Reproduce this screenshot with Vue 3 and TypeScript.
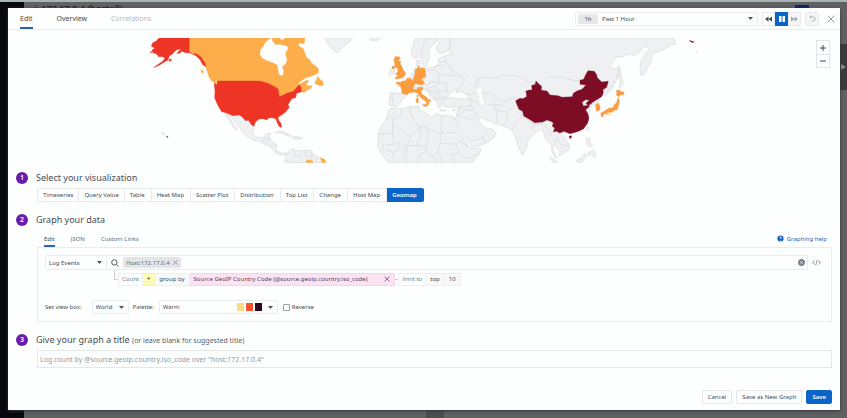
<script setup lang="ts">
import { ref } from 'vue'

type Tone = 'land' | 'sea' | 'light' | 'amber' | 'red' | 'wine'
interface Shape { tone: Tone; points: string }
interface Region { name: string; x: number; y: number; shapes: Shape[]; borders: string }

const tabs = ['Edit', 'Overview', 'Correlations']
const visualizations = ['Timeseries', 'Query Value', 'Table', 'Heat Map', 'Scatter Plot', 'Distribution', 'Top List', 'Change', 'Host Map', 'Geomap']
const editorTabs = ['Edit', 'JSON', 'Custom Links']
const palette = ['#fbdc85', '#f9532d', '#2d0820']

const activeTab = ref('Edit')
const activeVisualization = ref('Geomap')
const activeEditorTab = ref('Edit')
const query = ref('')
const reverse = ref(false)
const title = ref('')

const regions: Region[] = [
  {
    name: 'americas', x: 140, y: 30,
    shapes: [
      { tone: 'land', points: '553,24 638,24 626,38 608,50 598,64 590,68 576,56 566,44' },
      { tone: 'land', points: '262,250 278,257 298,255 310,265 325,270 342,288 340,310 350,322 372,322 378,312 392,310 388,325 372,330 365,338 335,328 315,315 300,295 290,285 282,270' },
      { tone: 'land', points: '256,252 264,254 270,264 280,282 292,302 284,296 270,276 262,264' },
      { tone: 'land', points: '365,338 372,328 388,324 400,338 410,345 408,362 428,370 440,368 436,376 420,375 405,368 395,352 380,345' },
      { tone: 'land', points: '405,308 418,303 432,305 455,318 446,319 425,310' },
      { tone: 'land', points: '455,322 466,319 478,321 490,326 476,328 460,327' },
      { tone: 'land', points: '434,397 438,376 448,362 460,356 466,362 480,362 498,360 515,362 522,372 532,380 545,384 556,390 558,398' },
      { tone: 'light', points: '148,24 392,24 376,36 370,48 362,58 359,72 366,84 384,94 398,98 412,105 414,120 416,132 424,138 431,132 431,120 427,110 438,101 442,88 437,76 438,66 444,58 442,48 430,46 420,42 408,44 398,34 396,24 420,24 424,30 432,28 434,24 495,24 493,40 488,42 480,38 474,44 482,52 490,56 494,66 499,82 510,90 514,99 528,109 536,117 535,129 522,136 512,139 495,145 480,155 473,166 488,157 502,150 506,153 498,164 506,168 516,167 514,174 500,182 491,188 485,186 482,170 470,170 460,184 440,190 418,200 415,178 405,170 380,158 360,153 232,153 220,150 207,141 203,128 196,108 186,86 172,72 160,72 148,66' },
      { tone: 'light', points: '524,160 534,138 540,149 550,155 550,166 538,167' },
      { tone: 'light', points: '207,140 220,147 231,158 228,161 215,153' },
      { tone: 'light', points: '183,118 190,124 188,131 184,126' },
      { tone: 'light', points: '497,393 508,389 518,392 518,398 500,398' },
      { tone: 'light', points: '541,384 554,388 558,398 546,398' },
      { tone: 'red', points: '57,24 148,24 148,66 158,72 170,71 182,80 194,97 198,110 188,104 181,90 168,77 150,69 136,68 126,64 118,70 110,70 124,56 110,60 102,66 98,72 88,78 84,90 70,98 58,106 40,113 56,102 68,94 75,84 68,80 56,80 50,72 38,68 36,60 44,55 34,48 38,38 48,34' },
      { tone: 'red', points: '86,90 94,86 94,92 88,94' },
      { tone: 'red', points: '30,66 34,64 35,68 32,69' },
      { tone: 'red', points: '232,153 360,153 380,158 405,170 415,178 418,200 440,190 460,184 470,172 477,165 482,168 485,185 470,190 467,203 455,206 450,215 444,224 448,232 436,247 424,256 414,262 416,271 423,280 425,292 419,291 413,281 408,267 396,263 386,264 380,270 370,266 358,267 346,276 342,289 334,284 326,271 316,272 308,262 298,255 278,257 262,250 245,245 238,234 230,218 224,204 225,182 222,160 231,164' },
      { tone: 'wine', points: '80,318 84,320 81,323' },
      { tone: 'land', points: '64,308 68,308 72,311 76,314 70,312' },
    ],
    borders: 'M376 337L390 325M392 348L410 345M408 360L405 368M460 356L464 376L482 380L484 398M498 382L497 362M498 382L520 376M515 365L516 390M530 380L528 396',
  },
  {
    name: 'eurasia', x: 370, y: 30,
    shapes: [
      { tone: 'land', points: '0,24 32,24 24,31 10,33 0,30' },
      { tone: 'land', points: '136,24 128,48 124,64 126,78 138,86 150,76 154,94 160,108 169,108 174,94 180,80 176,68 182,50 196,38 198,24' },
      { tone: 'land', points: '200,24 240,24 242,50 230,66 212,71 203,66 198,52 208,40 202,34' },
      { tone: 'land', points: '138,92 149,90 148,108 140,108' },
      { tone: 'land', points: '240,24 912,24 917,42 905,44 890,54 872,62 856,68 844,72 846,84 842,100 832,114 822,134 812,134 810,116 812,96 820,80 832,68 838,58 830,50 818,54 806,68 794,76 774,72 756,80 740,80 728,96 718,110 734,116 746,114 750,126 740,150 724,180 708,194 690,198 686,216 668,224 660,242 640,298 600,308 572,310 582,326 596,342 598,358 580,372 568,378 570,364 552,346 548,360 560,380 558,386 546,366 544,346 526,326 518,298 504,302 484,320 474,332 470,354 458,376 446,354 436,322 428,302 414,294 400,288 376,282 360,274 336,264 326,262 330,278 350,298 366,296 378,308 372,322 354,336 326,350 304,350 286,322 270,294 256,268 262,244 264,230 240,232 220,228 218,210 235,202 266,206 288,207 300,204 288,190 268,184 256,189 264,179 248,183 236,194 232,204 216,212 213,230 206,235 202,220 192,206 174,185 162,178 150,174 132,174 118,145 128,128 136,114 165,115 190,112 204,104 206,86 220,78 246,72 238,64 241,48' },
      { tone: 'sea', points: '318,180 328,172 340,176 332,186 340,194 336,202 344,214 342,226 332,225 325,212 326,200' },
      { tone: 'land', points: '60,188 80,190 96,190 108,196 106,202 96,208 90,220 78,230 66,228 56,224 58,206' },
      { tone: 'land', points: '64,116 74,118 74,130 62,136 56,132 60,124' },
      { tone: 'land', points: '60,236 80,234 94,236 120,230 146,228 150,242 166,248 184,262 198,250 214,256 238,258 250,260 262,288 278,320 298,354 334,356 326,376 308,397 54,397 34,370 22,350 24,340 24,312 34,286 48,270 52,252' },
      { tone: 'land', points: '210,240 228,240 226,243 212,243' },
      { tone: 'land', points: '246,239 256,237 252,243' },
      { tone: 'amber', points: '75,80 88,80 91,85 84,92 92,94 91,102 97,112 100,121 107,128 104,138 96,144 78,147 74,145 84,137 77,132 84,124 82,113 76,112 74,101 72,90' },
      { tone: 'amber', points: '66,110 72,107 76,112 71,117 66,115' },
      { tone: 'amber', points: '79,156 92,157 98,153 105,153 111,145 120,144 130,152 136,158 132,168 129,174 134,184 126,188 118,188 112,194 96,190 94,174 88,166 80,162' },
      { tone: 'amber', points: '136,118 143,116 143,109 149,110 151,115 163,113 166,123 167,141 155,147 163,158 158,164 144,163 132,159 130,146 134,134' },
      { tone: 'amber', points: '132,178 140,178 146,172 158,172 159,179 152,181 156,193 168,200 174,207 182,210 182,215 175,214 177,221 173,228 169,225 170,217 162,210 151,202 144,190 134,187' },
      { tone: 'amber', points: '158,223 170,224 168,230 160,228' },
      { tone: 'amber', points: '138,206 145,205 145,217 139,218' },
      { tone: 'amber', points: '141,195 144,194 144,203 141,201' },
    ],
    borders: 'M155 78L158 52L172 26M66 192L68 224M118 146L132 151M130 173L146 171M159 164L176 164L180 156L208 158M166 123L190 120L206 128L208 158L198 168L166 178M190 112L206 106L224 106M206 92L230 98L248 122L240 136L208 134M230 98L220 78M240 136L264 138L284 148L280 162L262 178M208 158L226 160L234 182M198 168L206 182L234 184M176 182L198 188L194 204M206 182L204 206L228 200M172 182L180 198L194 208L214 206M284 190L304 194L316 184M290 204L310 214L328 218M300 206L304 228L264 232M304 228L320 258M272 232L264 256L300 268L318 264M304 240L284 238L276 252M312 170L326 144L364 142L386 144L394 136L434 136L470 152L494 164M318 172L328 148M340 192L364 188L384 208L406 214L420 206L438 204M350 226L374 222L396 228L406 214M374 222L378 240L382 276M378 240L410 246L434 226M398 286L412 270L410 246M426 298L440 276L456 262L452 244M530 144L546 140L580 142L610 152L636 150M486 300L492 286L520 280L536 302M460 258L480 278L512 282L524 274M546 318L538 302M568 308L560 326L572 344L596 346M560 326L552 346M584 312L590 334M746 118L738 146L710 186M834 62L820 72M94 238L94 254L68 268M70 256L48 270M68 268L68 310L26 312M68 282L122 322M120 230L124 258L148 290L122 322M148 290L168 288L194 306M214 258L214 312M214 308L264 308M194 306L212 312L210 342L204 364M148 290L152 320L140 346L110 348L122 322M168 288L176 306L170 350L140 346M68 310L72 344L38 342M72 344L88 336L104 350L98 382M38 342L38 364M44 360L68 366L74 396M110 348L108 396M170 350L166 366L150 372L140 396M204 364L188 382L168 366M204 364L216 396M212 340L258 342L268 368L242 376M258 342L272 332L296 354M268 368L296 386L324 372M242 376L256 396M88 336L86 358L68 366M190 382L200 396M352 304L338 322L304 334M338 322L346 338M248 122L280 142',
  },
  {
    name: 'east-asia', x: 500, y: 30,
    shapes: [
      { tone: 'amber', points: '350,181 358,180 361,184 373,187 370,195 361,194 356,201 350,195' },
      { tone: 'amber', points: '354,203 358,212 356,226 351,240 343,241 336,247 318,248 328,254 317,252 308,247 326,235 338,233 344,223 350,218' },
      { tone: 'amber', points: '302,250 310,246 313,250 308,262 304,259' },
      { tone: 'amber', points: '286,224 296,219 300,230 300,240 289,244 288,234' },
      { tone: 'land', points: '356,106 362,122 364,140 370,160 364,170 358,176 360,154 356,134' },
      { tone: 'land', points: '259,328 269,324 271,338 278,348 268,350 260,342' },
      { tone: 'land', points: '265,368 281,360 289,375 282,383 276,374 266,376' },
      { tone: 'land', points: '228,392 244,384 254,370 262,378 250,390 246,397 232,397' },
      { tone: 'land', points: '148,382 160,386 172,397 160,397' },
      { tone: 'land', points: '261,292 266,290 264,302 260,299' },
      { tone: 'wine', points: '47,212 60,205 68,206 80,200 79,190 77,184 87,180 96,180 95,166 105,164 108,153 117,163 125,169 124,181 141,183 150,195 174,197 186,202 217,200 220,190 231,183 246,178 258,165 240,163 240,151 251,148 257,134 264,122 283,124 290,134 292,143 305,156 325,154 320,172 309,179 310,188 305,200 290,209 278,217 270,224 262,225 258,220 268,210 257,209 246,217 250,228 267,226 268,230 257,239 264,252 267,265 263,280 250,297 232,305 210,311 192,304 179,309 170,304 160,306 164,294 157,289 160,278 152,274 141,270 128,276 104,278 88,268 71,258 68,244 57,238 50,222' },
      { tone: 'wine', points: '207,319 214,317 215,322 210,326' },
    ],
    borders: '',
  },
  {
    name: 'bering', x: 600, y: 30,
    shapes: [
      { tone: 'wine', points: '268,31 274,33 281,35 280,38 272,35' },
      { tone: 'land', points: '289,65 292,66 291,68' },
    ],
    borders: '',
  },
]
</script>

<template>
  <div class="page">
    <div class="strip" aria-hidden="true"></div>
    <div class="rail" aria-hidden="true"></div>
    <div class="host" aria-hidden="true">i: 172.17.0.4 (hostall)</div>
    <div class="chip" aria-hidden="true"></div>
    <div class="edge" aria-hidden="true">
      <svg viewBox="0 0 6 8"><path d="M0 1l5 3-5 3z" /></svg>
    </div>
    <div class="foot" aria-hidden="true"></div>

    <main class="modal">
      <header class="top">
        <nav class="tabs">
          <button v-for="tab in tabs" :key="tab" type="button" class="tab" :class="{ active: tab === activeTab }" :disabled="tab === 'Correlations'" @click="activeTab = tab">{{ tab }}</button>
        </nav>
        <div class="time">
          <label class="range">
            <span class="short">1h</span>
            <select aria-label="Time range"><option>Past 1 Hour</option></select>
            <svg class="caret" viewBox="0 0 5 3"><path d="M0 0h5L2.500 3z" /></svg>
          </label>
          <div class="playback">
            <button type="button" aria-label="Back"><svg viewBox="0 0 8 6"><path d="M4 0v6L0 3zM8 0v6L4 3z" /></svg></button>
            <button type="button" class="pause" aria-label="Pause"><svg viewBox="0 0 8 8"><path d="M1 1h2.500v6H1zM4.500 1H7v6H4.500z" /></svg></button>
            <button type="button" class="off" aria-label="Forward"><svg viewBox="0 0 8 6"><path d="M0 0v6l4-3zM4 0v6l4-3z" /></svg></button>
          </div>
          <button type="button" class="reset" aria-label="Reset"><svg viewBox="0 0 8 8"><path d="M1 2.200h3.800a2.300 2.300 0 0 1 0 4.600H3M2.600.6L1 2.200l1.600 1.600" /></svg></button>
          <button type="button" class="close" aria-label="Close"><svg viewBox="0 0 8 8"><path d="M.7.7l6.600 6.600M7.300.7L.7 7.300" /></svg></button>
        </div>
      </header>

      <section class="map">
        <svg class="world" viewBox="8 38 832 125" role="img" aria-label="World map">
          <g v-for="region in regions" :key="region.name" :transform="`translate(${region.x} ${region.y}) scale(0.3333)`">
            <polygon v-for="(shape, i) in region.shapes" :key="i" :class="shape.tone" :points="shape.points" />
            <path class="border" :d="region.borders" />
          </g>
        </svg>
        <div class="zoom">
          <button type="button" aria-label="Zoom in"><svg viewBox="0 0 6 6"><path d="M3 0v6M0 3h6" /></svg></button>
          <button type="button" aria-label="Zoom out"><svg viewBox="0 0 6 6"><path d="M0 3h6" /></svg></button>
        </div>
      </section>

      <section class="step">
        <h2><span class="num">1</span>Select your visualization</h2>
        <div class="kinds">
          <button v-for="kind in visualizations" :key="kind" type="button" :class="{ active: kind === activeVisualization }" @click="activeVisualization = kind">{{ kind }}</button>
        </div>
      </section>

      <section class="step graph">
        <h2><span class="num">2</span>Graph your data</h2>
        <div class="subbar">
          <nav class="subtabs">
            <button v-for="tab in editorTabs" :key="tab" type="button" :class="{ active: tab === activeEditorTab }" @click="activeEditorTab = tab">{{ tab }}</button>
          </nav>
          <a href="#help" class="help">
            <svg viewBox="0 0 8 8"><circle cx="4" cy="4" r="3.500" /><path d="M2.900 3.200c0-1.500 2.300-1.400 2.200 0C5.100 4 4 4 4 4.900M4 5.600v.8" /></svg>
            Graphing help
          </a>
        </div>
        <div class="panel">
          <div class="query">
            <div class="pick source">
              <select aria-label="Source"><option>Log Events</option></select>
              <svg class="caret" viewBox="0 0 5 3"><path d="M0 0h5L2.500 3z" /></svg>
            </div>
            <div class="search">
              <svg class="glass" viewBox="0 0 8 8"><circle cx="3.400" cy="3.400" r="2.700" /><path d="M5.400 5.400L7.600 7.600" /></svg>
              <span class="tag">Host:172.17.0.4 <button type="button" aria-label="Remove filter"><svg viewBox="0 0 8 8"><path d="M.7.7l6.600 6.600M7.300.7L.7 7.300" /></svg></button></span>
              <input v-model="query" type="text" aria-label="Search query">
              <button type="button" class="clear" aria-label="Clear"><svg viewBox="0 0 8 8"><circle cx="4" cy="4" r="3.600" /><path d="M2.800 2.800l2.400 2.400M5.200 2.800L2.800 5.200" /></svg></button>
            </div>
            <button type="button" class="code" aria-label="Raw query"><svg viewBox="0 0 9 7"><path d="M2.500 1.500l-2 2 2 2M6.500 1.500l2 2-2 2M5.300.8L3.700 6.200" /></svg></button>
          </div>
          <div class="aggregate">
            <span class="elbow"></span>
            <span class="cell muted">Count</span>
            <span class="cell star">*</span>
            <span class="cell">group by</span>
            <span class="cell pink">Source GeoIP Country Code (@source.geoip.country.iso_code)
              <button type="button" aria-label="Remove group"><svg viewBox="0 0 8 8"><path d="M.7.7l6.600 6.600M7.300.7L.7 7.300" /></svg></button>
            </span>
            <span class="dash"></span>
            <span class="cell muted">limit to</span>
            <span class="cell">top</span>
            <span class="cell">10</span>
          </div>
          <div class="view">
            <label for="viewbox">Set view box:</label>
            <div class="pick worldbox">
              <select id="viewbox"><option>World</option></select>
              <svg class="caret" viewBox="0 0 5 3"><path d="M0 0h5L2.500 3z" /></svg>
            </div>
            <label for="palette">Palette:</label>
            <div class="pick palette">
              <select id="palette"><option>Warm</option></select>
              <span class="swatches"><i v-for="color in palette" :key="color" :style="{ background: color }"></i></span>
              <svg class="caret" viewBox="0 0 5 3"><path d="M0 0h5L2.500 3z" /></svg>
            </div>
            <label class="check"><input v-model="reverse" type="checkbox">Reverse</label>
          </div>
        </div>
      </section>

      <section class="step last">
        <h2><span class="num">3</span><label for="title">Give your graph a title <small>(or leave blank for suggested title)</small></label></h2>
        <input id="title" v-model="title" class="title" type="text" placeholder="Log count by @source.geoip.country.iso_code over &quot;host:172.17.0.4&quot;">
      </section>

      <footer class="actions">
        <button type="button">Cancel</button>
        <button type="button">Save as New Graph</button>
        <button type="button" class="save">Save</button>
      </footer>
    </main>
  </div>
</template>

<style>
body { background: #606163; }
</style>

<style scoped>
* { box-sizing: border-box; }
.page { position: relative; min-height: 100vh; padding: 8px 7px 8px 8px; background: #606163; font-family: "Noto Sans", "Open Sans", sans-serif; font-size: 6px; line-height: 10px; color: #454c55; overflow: hidden; }
button, select, input { font: inherit; color: inherit; margin: 0; padding: 0; border: 0; background: none; border-radius: 0; }
button { display: inline-flex; align-items: center; justify-content: center; white-space: nowrap; }
select { appearance: none; width: 100%; height: 100%; outline: 0; }
svg { display: block; }
button svg { fill: none; stroke: currentColor; }

.rail { position: absolute; inset: 2px auto 0 0; width: 24px; background: #08080e; }
.strip { position: absolute; inset: 0 0 auto 0; height: 2px; background: #a8b4b4; }
.host { position: absolute; left: 34px; top: 3px; color: #1e1f22; font-size: 9px; line-height: 12px; font-weight: 600; }
.chip { position: absolute; right: 38px; top: 5px; width: 14px; height: 3px; background: #0c2460; }
.edge { position: absolute; right: 0; top: 44px; width: 7px; height: 46px; padding: 19px 0 0 1px; background: #3a3b3d; }
.edge svg { width: 6px; height: 8px; fill: #8b8d90; }
.foot { position: absolute; left: 426px; bottom: 0; width: 18px; height: 8px; background: #4c4d4f; }

.modal { position: relative; display: flex; flex-direction: column; min-height: calc(100vh - 16px); background: #fdfefe; box-shadow: 0 1px 3px #35363a; }
.top { display: flex; justify-content: space-between; height: 22px; padding: 0 5px 0 12px; border-bottom: 1px solid #e9edf1; }
.tabs { display: flex; gap: 24px; }
.tab { font-size: 7px; border-bottom: 2px solid transparent; padding-top: 3px; }
.tab.active { border-color: #2a62b5; }
.tab:disabled { color: #b6babf; }
.time { display: flex; align-items: center; }
.range { display: flex; align-items: center; width: 183px; height: 14px; margin-right: 4px; padding: 0 4px 0 2px; border: 1px solid #e9ecef; border-radius: 2px; }
.short { flex: none; width: 20px; height: 10px; margin-right: 4px; border-radius: 2px; background: #e6e7ea; text-align: center; }
.caret { flex: none; width: 5px; height: 3px; fill: #50565e; pointer-events: none; }
.playback { display: flex; }
.playback button, .reset { width: 13px; height: 14px; border: 1px solid #e8eaed; color: #454b54; }
.playback svg { width: 7px; height: 6px; fill: currentColor; stroke: none; }
.playback .pause { background: #0b64c8; border-color: #0b64c8; color: #fff; }
.playback .pause svg { width: 8px; height: 8px; }
.playback .off { background: #f5f6f7; color: #a6aab0; }
.time .reset { width: 14px; margin-left: 4px; background: #f5f6f7; color: #a6aab0; border-radius: 2px; }
.reset svg { width: 7px; height: 7px; }
.close { width: 8px; height: 8px; margin-left: 8px; color: #777d85; }
.close svg { width: 8px; height: 8px; stroke-width: 0.8; }

.map { position: relative; padding-top: 8px; }
.world { width: 100%; height: auto; }
polygon { stroke-width: 1; stroke-linejoin: round; }
.land { fill: #eff0f2; stroke: #cdd0d6; stroke-width: 1.5; }
.sea { fill: #fdfefe; stroke: #d7dade; }
.light { fill: #fdae4b; stroke: #fdae4b; }
.amber { fill: #fb9d3e; stroke: #ef9238; }
.red { fill: #ee3424; stroke: #ee3424; }
.wine { fill: #7d0d25; stroke: #7d0d25; }
.border { fill: none; stroke: #cdd0d6; stroke-width: 1.5; }
.zoom { position: absolute; right: 10px; top: 10px; display: flex; flex-direction: column; border: 1px solid #e2e5e8; }
.zoom button { width: 12px; height: 13px; color: #40464e; }
.zoom button + button { border-top: 1px solid #e2e5e8; }
.zoom svg { width: 6px; height: 6px; stroke-width: 1; }

.step { padding: 9px 8px 0 29px; }
h2 { display: flex; align-items: center; height: 12px; margin: 0 0 4px -21px; font-size: 9px; line-height: 12px; font-weight: 400; color: #464c55; }
h2 small { font-size: 7px; color: #596069; }
.num { display: grid; place-items: center; width: 12px; height: 12px; margin-right: 8px; border-radius: 50%; background: #6a1ba8; color: #fff; font-size: 7px; line-height: 10px; font-weight: 600; }
.kinds { display: flex; }
.kinds button { height: 14px; padding: 0 5px; border: 1px solid #e8ebee; border-left-width: 0; }
.kinds button:first-child { border-left-width: 1px; }
.kinds button:nth-child(n + 3) { padding-right: 6px; }
.kinds .active { background: #0b64c8; border-color: #0b64c8; color: #fff; font-weight: 600; border-radius: 0 2px 2px 0; }

.graph { padding-top: 12px; }
.subbar { display: flex; justify-content: space-between; height: 17px; padding: 0 5px 0 7px; }
.subtabs { display: flex; gap: 16px; }
.subtabs button { padding-top: 2px; border-bottom: 2px solid transparent; color: #6a7078; }
.subtabs .active { border-color: #2a62b5; color: #454c55; }
.help { display: flex; align-items: center; gap: 3px; color: #2f66b5; text-decoration: none; }
.help svg { width: 7px; height: 7px; fill: #0b5bbd; }
.help path { fill: none; stroke: #fff; stroke-width: 1; }
.panel { padding: 7px; border: 1px solid #e9ecef; }
.query { display: flex; align-items: center; height: 15px; }
.pick { position: relative; display: flex; align-items: center; height: 14px; padding: 0 4px 0 3px; border: 1px solid #e9ecef; border-radius: 2px; }
.source { width: 62px; height: 15px; }
.search { display: flex; align-items: center; flex: 1; height: 15px; padding: 0 2px 0 4px; border: 1px solid #e9ecef; border-left: 0; }
.search input { flex: 1; min-width: 0; outline: 0; }
.glass { width: 8px; height: 8px; margin-right: 4px; fill: none; stroke: #50565e; }
.tag { display: inline-flex; align-items: center; gap: 3px; height: 11px; padding: 0 3px; border-radius: 2px; background: #e4e5e8; color: #6a7078; }
.tag svg { width: 5px; height: 5px; }
.clear { width: 7px; height: 7px; color: #7b8189; }
.clear svg { width: 7px; height: 7px; }
.clear circle { fill: #7b8189; }
.clear path { stroke: #fff; }
.code { width: 9px; margin: 0 3px 0 4px; color: #777d85; }
.code svg { width: 9px; height: 7px; stroke-width: 0.8; }
.aggregate { display: flex; align-items: center; margin-top: 2px; padding-left: 69px; height: 14px; }
.elbow { width: 4px; height: 10px; margin-top: -8px; border: solid #ced2d6; border-width: 0 0 1px 1px; }
.cell { display: inline-flex; align-items: center; height: 13px; padding: 0 4px; border: 1px solid #eceef1; border-left-width: 0; background: #f7f8f9; white-space: nowrap; }
.cell.muted { padding: 0 3px; border-left-width: 1px; background: none; color: #7b8189; }
.cell.star { background: #fffbb5; border-color: #f5f1bf; font-weight: 600; }
.cell.pink { gap: 17px; background: #fce3f4; border-color: #f3d5e9; color: #573f59; }
.pink svg { width: 6px; height: 6px; stroke-width: 0.9; }
.dash { width: 3px; border-top: 1px solid #ced2d6; }
.view { display: flex; align-items: center; height: 14px; margin-top: 14px; }
.worldbox { width: 37px; margin: 0 4px 0 10px; }
.palette { width: 119px; margin: 0 5px; }
.swatches { display: flex; gap: 2px; margin-right: 6px; pointer-events: none; }
.swatches i { width: 7px; height: 8px; }
.check { display: flex; align-items: center; gap: 2px; }
.check input { appearance: none; width: 7px; height: 7px; border: 1px solid #9ba0a6; border-radius: 1px; }
.check input:checked { background: #0b64c8; }
.last { padding-top: 12px; }
.title { display: block; width: 100%; height: 18px; padding: 0 2px; border: 1px solid #e4e7ea; font-size: 7px; outline: 0; }
.title::placeholder { color: #959aa1; opacity: 1; }
.actions { display: flex; justify-content: flex-end; gap: 4px; margin-top: auto; padding: 0 8px 6px; }
.actions button { height: 14px; padding: 0 5px; border: 1px solid #e4e7ea; border-radius: 2px; }
.actions .save { border-color: #0b64c8; background: #0b64c8; color: #fff; font-weight: 600; }
</style>
